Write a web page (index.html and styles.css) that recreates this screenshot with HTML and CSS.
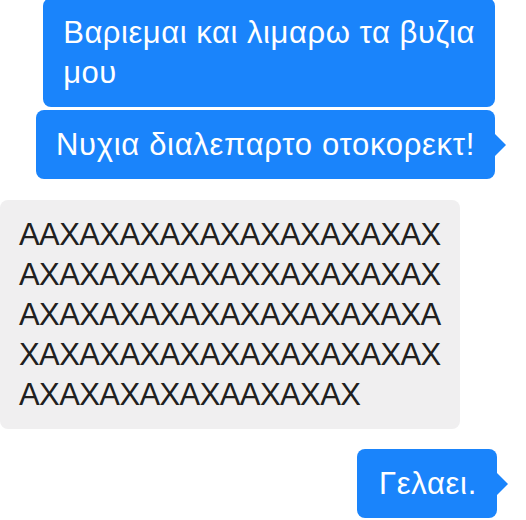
FILE: index.html
```html
<!DOCTYPE html>
<html lang="el">
<head>
    <meta charset="UTF-8">
    <meta name="viewport" content="width=device-width, initial-scale=1.0">
    <title>Μηνύματα</title>
    <link rel="stylesheet" href="styles.css">
</head>
<body>
    <div class="chat">
        <div class="bubble sent first">Βαριεμαι και λιμαρω τα βυζια<br>μου</div>
        <div class="bubble sent tail">Νυχια διαλεπαρτο οτοκορεκτ!</div>

        <div class="bubble received">AAXAXAXAXAXAXAXAXAXAX<br>AXAXAXAXAXAXXAXAXAXAX<br>AXAXAXAXAXAXAXAXAXAXA<br>XAXAXAXAXAXAXAXAXAXAX<br>AXAXAXAXAXAAXAXAX</div>

        <div class="bubble sent tail last">Γελαει.</div>
    </div>
</body>
</html>
```

FILE: styles.css
```css
body {
    margin: 0;
    background: #fff;
    font-family: "Liberation Sans", Arial, sans-serif;
}
.chat {
    display: flex;
    flex-direction: column;
    width: 526px;
    height: 520px;
    overflow: hidden;
}
.bubble {
    position: relative;
    font-size: 31px;
    letter-spacing: -0.6px;
    line-height: 40px;
    padding: 15px 20px 14px;
    border-radius: 8px;
    white-space: nowrap;
}
.sent {
    align-self: flex-end;
    margin-right: 31px;
    background: #1a84fb;
    color: #fff;
    letter-spacing: 0.7px;
}
.first {
    margin-top: -2px;
    letter-spacing: 0.55px;
}
.first + .sent {
    margin-top: 3px;
}
.received {
    align-self: flex-start;
    margin-top: 21px;
    padding-left: 19px;
    padding-right: 19px;
    background: #f0eff0;
    color: #202020;
}
.last {
    margin-top: 20px;
    margin-right: 29px;
    padding-left: 22px;
    padding-right: 20px;
}
.tail::after {
    content: "";
    position: absolute;
    right: -11px;
    top: 50%;
    margin-top: -11px;
    border-style: solid;
    border-width: 11px 0 11px 11px;
    border-color: transparent transparent transparent #1a84fb;
}
```
